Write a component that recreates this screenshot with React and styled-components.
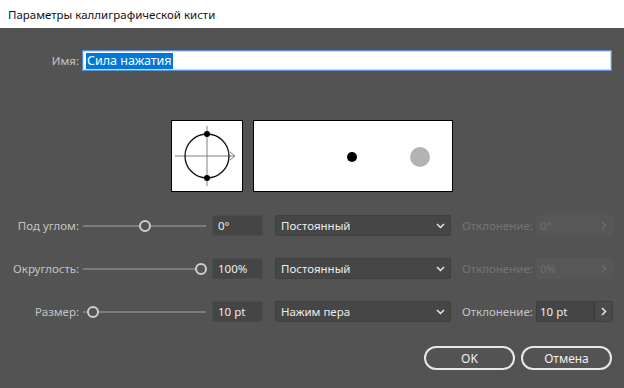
import React from 'react'
import styled, { createGlobalStyle } from 'styled-components'

const GlobalStyle = createGlobalStyle`
  html, body {
    margin: 0;
    padding: 0;
    background: #535353;
  }
  * {
    box-sizing: border-box;
  }
`

const rows = [
  { label: 'Под углом:', pos: 0.48, value: '0°', mode: 'Постоянный', dev: '0°', enabled: false },
  { label: 'Округлость:', pos: 1, value: '100%', mode: 'Постоянный', dev: '0%', enabled: false },
  { label: 'Размер:', pos: 0, value: '10 pt', mode: 'Нажим пера', dev: '10 pt', enabled: true },
]

const Chevron = ({ dir = 'down', color = '#e8e8e8' }) =>
  dir === 'down' ? (
    <svg width="9" height="6" viewBox="0 0 9 6">
      <path d="M1 1 L4.5 4.5 L8 1" fill="none" stroke={color} strokeWidth="1.5" />
    </svg>
  ) : (
    <svg width="6" height="9" viewBox="0 0 6 9">
      <path d="M1 1 L4.5 4.5 L1 8" fill="none" stroke={color} strokeWidth="1.5" />
    </svg>
  )

const NibPreview = () => (
  <svg width="70" height="70" viewBox="0 0 70 70">
    <line x1="3" y1="35" x2="63" y2="35" stroke="#808080" strokeWidth="1" />
    <path d="M58 31 L63 35 L58 39" fill="none" stroke="#808080" strokeWidth="1" />
    <line x1="35" y1="5" x2="35" y2="65" stroke="#808080" strokeWidth="1" />
    <circle cx="35" cy="35" r="22" fill="none" stroke="#111" strokeWidth="1.3" />
    <circle cx="35" cy="13" r="3" fill="#000" />
    <circle cx="35" cy="57" r="3" fill="#000" />
  </svg>
)

const SizePreview = () => (
  <svg width="198" height="70" viewBox="0 0 198 70">
    <circle cx="98" cy="36" r="5" fill="#000" />
    <circle cx="166" cy="36" r="10" fill="#b3b3b3" />
  </svg>
)

const App = () => {
  return (
    <Window>
      <GlobalStyle />
      <TitleBar>Параметры каллиграфической кисти</TitleBar>
      <Body>
        <NameRow>
          <Label>Имя:</Label>
          <NameField>
            <Selected>Сила нажатия</Selected>
          </NameField>
        </NameRow>

        <PreviewRow>
          <PreviewBox $w={72}>
            <NibPreview />
          </PreviewBox>
          <PreviewBox $w={200}>
            <SizePreview />
          </PreviewBox>
        </PreviewRow>

        <Controls>
          {rows.map((r) => (
            <ControlRow key={r.label}>
              <Label>{r.label}</Label>
              <Slider>
                <Track />
                <Thumb style={{ left: `${r.pos * 108}px` }} />
              </Slider>
              <Field $w={51}>{r.value}</Field>
              <Select>
                <span>{r.mode}</span>
                <Chevron />
              </Select>
              <DevLabel $enabled={r.enabled}>Отклонение:</DevLabel>
              <DevGroup $enabled={r.enabled}>
                <DevValue>{r.dev}</DevValue>
                <StepButton $enabled={r.enabled}>
                  <Chevron dir="right" color={r.enabled ? '#e8e8e8' : '#6a6a6a'} />
                </StepButton>
              </DevGroup>
            </ControlRow>
          ))}
        </Controls>

        <Footer>
          <PillButton>OK</PillButton>
          <PillButton>Отмена</PillButton>
        </Footer>
      </Body>
    </Window>
  )
}

const Window = styled.div`
  width: 624px;
  height: 388px;
  display: flex;
  flex-direction: column;
  font-family: 'Noto Sans', 'Liberation Sans', sans-serif;
  font-size: 11.5px;
`
const TitleBar = styled.div`
  height: 28px;
  background: #ffffff;
  color: #111;
  padding-left: 8px;
  display: flex;
  align-items: center;
  font-size: 11.5px;
`
const Body = styled.div`
  flex: 1;
  background: #535353;
  display: flex;
  flex-direction: column;
  padding-top: 22px;
`
const Label = styled.div`
  width: 79px;
  text-align: right;
  color: #c4c4c4;
  flex-shrink: 0;
`
const NameRow = styled.div`
  display: flex;
  align-items: center;
  height: 21px;
`
const NameField = styled.div`
  margin-left: 3px;
  width: 530px;
  height: 21px;
  background: #fff;
  border: 1px solid #5b8fd0;
  box-shadow: inset 0 0 0 1px #c6dcf5;
  display: flex;
  align-items: center;
  padding-left: 3px;
`
const Selected = styled.span`
  background: #0078d7;
  color: #fff;
  font-size: 12.5px;
  line-height: 16px;
  padding: 0 1px;
`
const PreviewRow = styled.div`
  display: flex;
  gap: 10px;
  margin-top: 49px;
  padding-left: 171px;
`
const PreviewBox = styled.div`
  width: ${(p) => p.$w}px;
  height: 72px;
  background: #fff;
  border: 1px solid #000;
  display: flex;
  align-items: center;
  justify-content: center;
`
const Controls = styled.div`
  display: flex;
  flex-direction: column;
  gap: 22px;
  margin-top: 23px;
`
const ControlRow = styled.div`
  display: flex;
  align-items: center;
  height: 21px;
`
const Slider = styled.div`
  position: relative;
  width: 123px;
  height: 12px;
  margin-left: 4px;
`
const Track = styled.div`
  position: absolute;
  left: 0;
  right: 0;
  top: 5px;
  height: 2px;
  background: #7c7c7c;
`
const Thumb = styled.div`
  position: absolute;
  top: 0;
  margin-left: 4px;
  width: 12px;
  height: 12px;
  border-radius: 50%;
  border: 2px solid #cfcfcf;
  background: #535353;
`
const Field = styled.div`
  width: ${(p) => p.$w}px;
  height: 21px;
  margin-left: 6px;
  background: #454545;
  border: 1px solid #4c4c4c;
  border-radius: 2px;
  color: #ececec;
  padding-left: 5px;
  display: flex;
  align-items: center;
`
const Select = styled.div`
  width: 176px;
  height: 21px;
  margin-left: 12px;
  background: #464646;
  border: 1px solid #3f3f3f;
  border-radius: 2px;
  color: #ececec;
  padding: 0 5px 0 5px;
  display: flex;
  align-items: center;
  justify-content: space-between;
`
const DevLabel = styled.div`
  margin-left: 11px;
  width: 74px;
  color: ${(p) => (p.$enabled ? '#c4c4c4' : '#737373')};
`
const DevGroup = styled.div`
  display: flex;
  width: 77px;
  height: 21px;
  background: ${(p) => (p.$enabled ? '#454545' : '#575757')};
  border: 1px solid ${(p) => (p.$enabled ? '#3f3f3f' : '#575757')};
  border-radius: 2px;
  color: ${(p) => (p.$enabled ? '#ececec' : '#6f6f6f')};
`
const DevValue = styled.div`
  flex: 1;
  display: flex;
  align-items: center;
  padding-left: 3px;
`
const StepButton = styled.div`
  width: 18px;
  display: flex;
  align-items: center;
  justify-content: center;
  border-left: 1px solid ${(p) => (p.$enabled ? '#3a3a3a' : '#575757')};
  background: ${(p) => (p.$enabled ? '#4a4a4a' : '#575757')};
`
const Footer = styled.div`
  display: flex;
  justify-content: flex-end;
  gap: 6px;
  padding-right: 12px;
  margin-top: 24px;
`
const PillButton = styled.button`
  width: 91px;
  height: 24px;
  border-radius: 12px;
  border: 2px solid #e8e8e8;
  background: transparent;
  color: #f0f0f0;
  font-family: 'Noto Sans', 'Liberation Sans', sans-serif;
  font-size: 12px;
  padding: 0;
`

export default App
